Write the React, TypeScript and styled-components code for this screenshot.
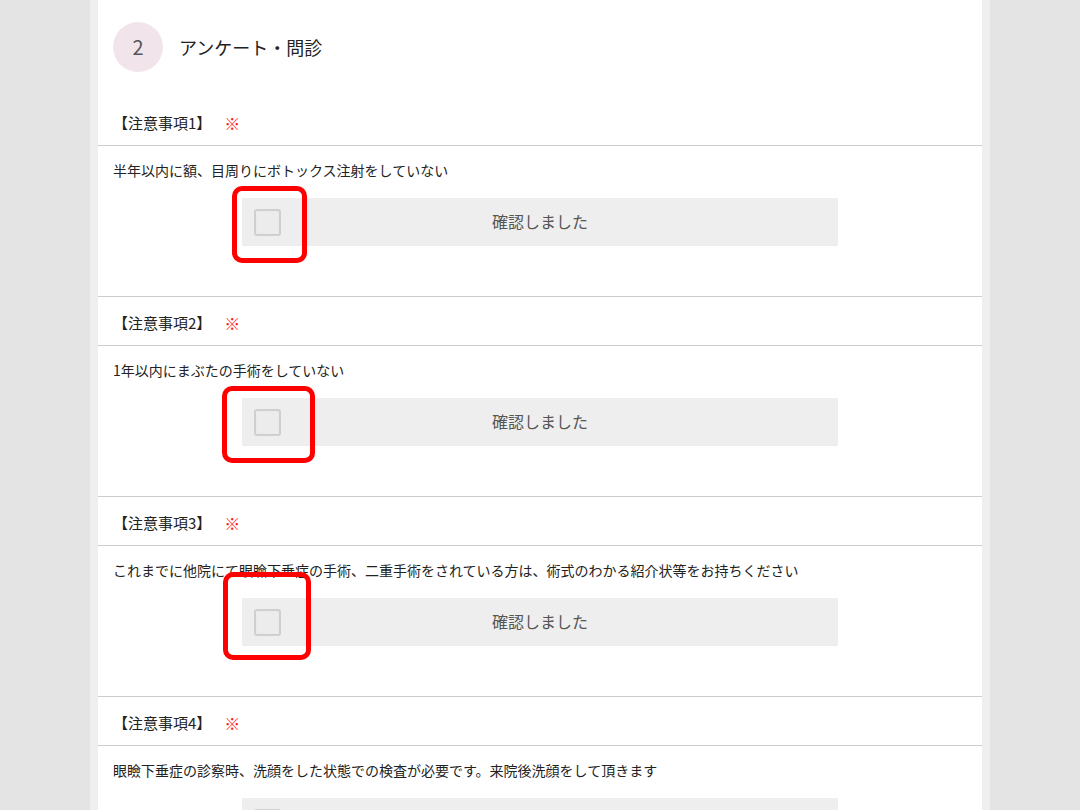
import { FC } from 'react'
import styled, { createGlobalStyle } from 'styled-components'

const GlobalStyle = createGlobalStyle`
  html, body {
    margin: 0;
    padding: 0;
    background: #e4e4e4;
  }
  body {
    font-family: 'Noto Sans CJK JP', 'Noto Sans', sans-serif;
    color: #222;
  }
`

type Mark = { left: number; top: number; width: number; height: number }

type Notice = {
  no: number
  text: string
  mark?: Mark
}

const NOTICES: Notice[] = [
  {
    no: 1,
    text: '半年以内に額、目周りにボトックス注射をしていない',
    mark: { left: -10, top: -12, width: 75, height: 77 },
  },
  {
    no: 2,
    text: '1年以内にまぶたの手術をしていない',
    mark: { left: -20, top: -12, width: 93, height: 77 },
  },
  {
    no: 3,
    text: 'これまでに他院にて眼瞼下垂症の手術、二重手術をされている方は、術式のわかる紹介状等をお持ちください',
    mark: { left: -19, top: -26, width: 88, height: 88 },
  },
  {
    no: 4,
    text: '眼瞼下垂症の診察時、洗顔をした状態での検査が必要です。来院後洗顔をして頂きます',
  },
]

const App: FC = () => {
  return (
    <>
      <GlobalStyle />
      <Page>
        <Panel>
          <StepHeader>
            <StepNumber>2</StepNumber>
            <StepTitle>アンケート・問診</StepTitle>
          </StepHeader>

          {NOTICES.map((n) => (
            <Section key={n.no}>
              <SectionHead>
                <span>【注意事項{n.no}】</span>
                <Required>※</Required>
              </SectionHead>
              <SectionBody>
                <Question>{n.text}</Question>
                <ConfirmBox>
                  <CheckBox />
                  <ConfirmLabel>確認しました</ConfirmLabel>
                  {n.mark && (
                    <Highlight
                      style={{
                        left: n.mark.left,
                        top: n.mark.top,
                        width: n.mark.width,
                        height: n.mark.height,
                      }}
                    />
                  )}
                </ConfirmBox>
              </SectionBody>
            </Section>
          ))}
        </Panel>
      </Page>
    </>
  )
}

const Page = styled.div`
  display: flex;
  justify-content: center;
  min-height: 100vh;
`

const Panel = styled.div`
  width: 884px;
  background: #fff;
  border-left: 8px solid #efefef;
  border-right: 8px solid #efefef;
  overflow: hidden;
`

const StepHeader = styled.div`
  display: flex;
  align-items: center;
  gap: 16px;
  padding: 22px 15px 25px;
`

const StepNumber = styled.div`
  width: 50px;
  height: 50px;
  border-radius: 50%;
  background: #f1e4eb;
  display: flex;
  align-items: center;
  justify-content: center;
  font-size: 20px;
  line-height: 1;
  color: #555;
`

const StepTitle = styled.h2`
  margin: 0;
  font-size: 18px;
  font-weight: 400;
  line-height: 24px;
  color: #222;
`

const Section = styled.section`
  border-bottom: 1px solid #cccccc;
`

const SectionHead = styled.div`
  display: flex;
  align-items: center;
  height: 24px;
  padding: 14px 15px 10px;
  font-size: 15px;
  line-height: 24px;
  border-bottom: 1px solid #cccccc;
  color: #222;
`

const Required = styled.span`
  color: #ff2222;
  margin-left: 13px;
  font-size: 16px;
  line-height: 24px;
`

const SectionBody = styled.div`
  padding: 12px 15px 50px;
`

const Question = styled.p`
  margin: 0 0 16px;
  font-size: 14px;
  line-height: 24px;
  color: #222;
`

const ConfirmBox = styled.label`
  position: relative;
  display: grid;
  grid-template-columns: 27px 1fr 27px;
  align-items: center;
  width: 596px;
  height: 48px;
  margin: 0 auto;
  padding: 0 12px;
  box-sizing: border-box;
  background: #eeeeee;
`

const CheckBox = styled.span`
  width: 27px;
  height: 27px;
  box-sizing: border-box;
  border: 2px solid #cfcfcf;
  border-radius: 3px;
  background: #ececec;
  box-shadow: inset 0 0 1px rgba(0, 0, 0, 0.08);
`

const ConfirmLabel = styled.span`
  text-align: center;
  font-size: 16px;
  line-height: 24px;
  padding-bottom: 3px;
  color: #555;
`

const Highlight = styled.span`
  position: absolute;
  box-sizing: border-box;
  border: 5px solid #ff0000;
  border-radius: 10px;
  pointer-events: none;
`

export default App
